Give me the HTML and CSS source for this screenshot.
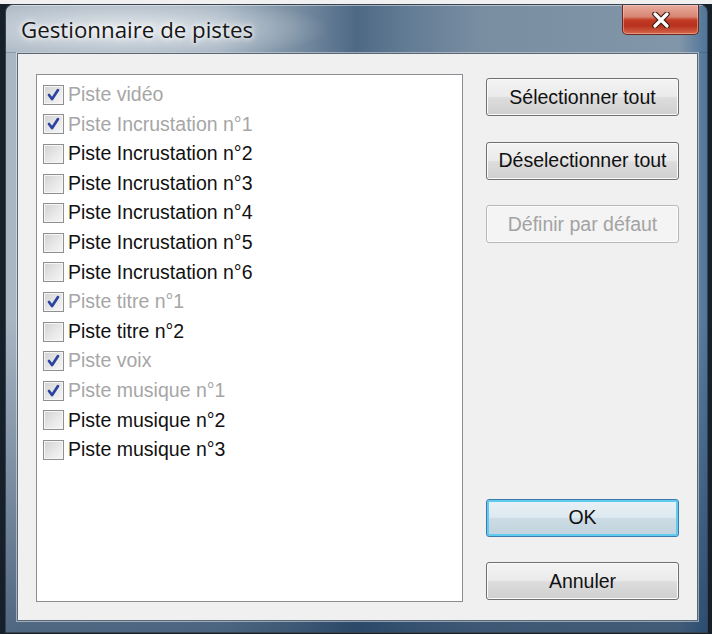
FILE: index.html
```html
<!DOCTYPE html>
<html lang="fr">
<head>
<meta charset="utf-8">
<title>Gestionnaire de pistes</title>
<link rel="stylesheet" href="styles.css">
</head>
<body>
<div class="window">
  <div class="titlebar">
    <span class="title">Gestionnaire de pistes</span>
    <button class="close" aria-label="Fermer">
      <svg width="18" height="16" viewBox="0 0 18 16">
        <path d="M3 2 L15 14 M15 2 L3 14" stroke="#3a1a14" stroke-width="5.5" stroke-linecap="round"/>
        <path d="M3 2 L15 14 M15 2 L3 14" stroke="#ffffff" stroke-width="3.2" stroke-linecap="round"/>
      </svg>
    </button>
  </div>
  <div class="frame">
    <div class="client">
      <div class="list">
        <label class="row checked"><span class="box"><svg viewBox="0 0 20 20"><polyline points="5,10 8.5,14.5 15,4.5"/></svg></span>Piste vidéo</label>
        <label class="row checked"><span class="box"><svg viewBox="0 0 20 20"><polyline points="5,10 8.5,14.5 15,4.5"/></svg></span>Piste Incrustation n°1</label>
        <label class="row"><span class="box"></span>Piste Incrustation n°2</label>
        <label class="row"><span class="box"></span>Piste Incrustation n°3</label>
        <label class="row"><span class="box"></span>Piste Incrustation n°4</label>
        <label class="row"><span class="box"></span>Piste Incrustation n°5</label>
        <label class="row"><span class="box"></span>Piste Incrustation n°6</label>
        <label class="row checked"><span class="box"><svg viewBox="0 0 20 20"><polyline points="5,10 8.5,14.5 15,4.5"/></svg></span>Piste titre n°1</label>
        <label class="row"><span class="box"></span>Piste titre n°2</label>
        <label class="row checked"><span class="box"><svg viewBox="0 0 20 20"><polyline points="5,10 8.5,14.5 15,4.5"/></svg></span>Piste voix</label>
        <label class="row checked"><span class="box"><svg viewBox="0 0 20 20"><polyline points="5,10 8.5,14.5 15,4.5"/></svg></span>Piste musique n°1</label>
        <label class="row"><span class="box"></span>Piste musique n°2</label>
        <label class="row"><span class="box"></span>Piste musique n°3</label>
      </div>
      <div class="buttons">
        <button class="btn">Sélectionner tout</button>
        <button class="btn">Déselectionner tout</button>
        <button class="btn disabled">Définir par défaut</button>
        <button class="btn default push">OK</button>
        <button class="btn">Annuler</button>
      </div>
    </div>
  </div>
</div>
</body>
</html>
```
FILE: styles.css
```css
html, body {
  margin: 0;
  height: 100%;
}
body {
  box-sizing: border-box;
  padding: 4px 4px 0 5px;
  overflow: hidden;
  background: linear-gradient(#f0f0f0 0 4px, #16202b 4px);
  font-family: "Liberation Sans", Arial, sans-serif;
}
.window {
  box-sizing: border-box;
  height: 629px;
  border: 1px solid #38434f;
  border-radius: 8px 8px 0 0;
  display: flex;
  flex-direction: column;
  overflow: hidden;
  background:
    linear-gradient(to bottom, rgba(255,255,255,0) 50%, rgba(20,50,85,.6) 100%),
    linear-gradient(90deg, #a9b6c3 0%, #9eaebd 30%, #7a8fa3 41%, #4e6985 50%, #627b94 57%, #7a8ea2 68%, #8296a9 96%, #4f7599 100%);
}
.titlebar {
  height: 48px;
  flex: none;
  display: flex;
  justify-content: space-between;
  align-items: flex-start;
  padding-left: 15px;
  box-shadow: inset 0 1px 0 rgba(255,255,255,.45), inset 0 -1px 0 rgba(40,60,80,.25);
  background: radial-gradient(ellipse 200px 34px at 125px 24px, rgba(255,255,255,.7), rgba(255,255,255,0) 100%);
}
.title {
  padding-top: 10px;
  font-family: "Open Sans", "Noto Sans", sans-serif;
  font-size: 22.3px;
  line-height: 29px;
  color: #161616;
  text-shadow: 0 0 8px #fff, 0 0 4px #fff;
}
.close {
  width: 77px;
  height: 30px;
  margin-right: 8px;
  padding: 0;
  border: 1px solid #6a2a22;
  border-top: none;
  border-radius: 0 0 5px 5px;
  display: flex;
  align-items: center;
  justify-content: center;
  background: linear-gradient(#e7ad9f 0%, #d88573 40%, #c23a24 52%, #b8321e 72%, #d5684c 100%);
  box-shadow: inset 0 0 0 1px rgba(255,210,200,.45);
}
.frame {
  flex: 1;
  display: flex;
  padding: 0 9px 11px 11px;
}
.client {
  flex: 1;
  display: flex;
  gap: 23px;
  padding: 20px 18px 18px 18px;
  background: #f0f0f0;
  border: 1px solid #5a6876;
  box-shadow: 0 0 0 1px rgba(255,255,255,.45);
}
.list {
  box-sizing: border-box;
  width: 427px;
  border: 1px solid #8a8d91;
  background: #fff;
  padding: 5px 0 0 6px;
}
.row {
  height: 29.6px;
  display: flex;
  align-items: center;
  gap: 4px;
  font-size: 19.5px;
  line-height: 1;
  color: #111;
}
.row.checked {
  color: #a6a6a6;
}
.box {
  box-sizing: border-box;
  width: 21px;
  height: 20px;
  flex: none;
  border: 1px solid #8f8f8f;
  background: linear-gradient(135deg, #d2d2d2 0%, #e8e8e8 55%, #f6f6f6 100%);
  box-shadow: inset 0 0 0 1px #f6f6f6;
}
.box svg {
  display: block;
  width: 19px;
  height: 18px;
}
.box polyline {
  fill: none;
  stroke: #2d43a0;
  stroke-width: 3;
  stroke-linejoin: round;
  stroke-linecap: round;
}
.buttons {
  width: 193px;
  display: flex;
  flex-direction: column;
  gap: 25.5px;
  padding: 4px 0 2px;
}
.btn {
  box-sizing: border-box;
  height: 38px;
  padding: 0;
  border: 1px solid #707070;
  border-radius: 3px;
  font-family: "Liberation Sans", Arial, sans-serif;
  font-size: 19.5px;
  color: #111;
  background: linear-gradient(#f3f3f3 0%, #ebebeb 48%, #dddddd 52%, #cfcfcf 100%);
  box-shadow: inset 0 0 0 1px #fbfbfb;
}
.btn.disabled {
  border-color: #b4b8bb;
  color: #a3a3a3;
  background: #f4f4f4;
  box-shadow: inset 0 0 0 1px #fcfcfc;
}
.btn.default {
  border-color: #3d7bad;
  background: linear-gradient(#e8f1f6 0%, #dde9f0 48%, #ccdbe4 52%, #c2d3de 100%);
  box-shadow: inset 0 0 0 2px #5fcbef;
}
.push {
  margin-top: auto;
}
```
